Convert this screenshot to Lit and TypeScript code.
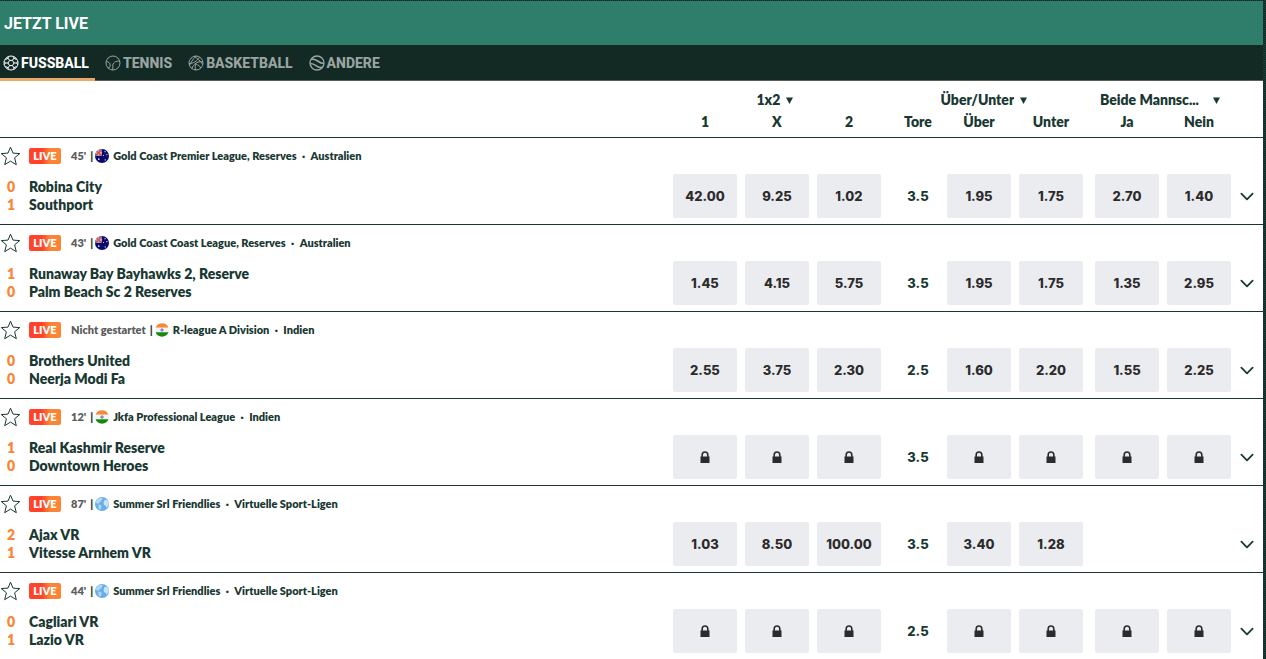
import { LitElement, html, svg, css, nothing } from "lit";
import { customElement, property } from "lit/decorators.js";
import { classMap } from "lit/directives/class-map.js";

type Flag = "au" | "in" | "world";

interface Match {
  time: string;
  flag: Flag;
  league: string;
  country: string;
  teams: [string, string];
  score: [number, number];
  goals: string;
  // null: market is locked, undefined: market is not offered
  odds: (string | null | undefined)[];
}

const LOCKED = Array(7).fill(null);

const MATCHES: Match[] = [
  { time: "45'", flag: "au", league: "Gold Coast Premier League, Reserves", country: "Australien", teams: ["Robina City", "Southport"], score: [0, 1], goals: "3.5", odds: ["42.00", "9.25", "1.02", "1.95", "1.75", "2.70", "1.40"] },
  { time: "43'", flag: "au", league: "Gold Coast Coast League, Reserves", country: "Australien", teams: ["Runaway Bay Bayhawks 2, Reserve", "Palm Beach Sc 2 Reserves"], score: [1, 0], goals: "3.5", odds: ["1.45", "4.15", "5.75", "1.95", "1.75", "1.35", "2.95"] },
  { time: "Nicht gestartet", flag: "in", league: "R-league A Division", country: "Indien", teams: ["Brothers United", "Neerja Modi Fa"], score: [0, 0], goals: "2.5", odds: ["2.55", "3.75", "2.30", "1.60", "2.20", "1.55", "2.25"] },
  { time: "12'", flag: "in", league: "Jkfa Professional League", country: "Indien", teams: ["Real Kashmir Reserve", "Downtown Heroes"], score: [1, 0], goals: "3.5", odds: LOCKED },
  { time: "87'", flag: "world", league: "Summer Srl Friendlies", country: "Virtuelle Sport-Ligen", teams: ["Ajax VR", "Vitesse Arnhem VR"], score: [2, 1], goals: "3.5", odds: ["1.03", "8.50", "100.00", "3.40", "1.28", undefined, undefined] },
  { time: "44'", flag: "world", league: "Summer Srl Friendlies", country: "Virtuelle Sport-Ligen", teams: ["Cagliari VR", "Lazio VR"], score: [0, 1], goals: "2.5", odds: LOCKED },
];

const SPORT_ICONS = {
  football: svg`<circle cx="8" cy="8" r="7"/><path d="M6.500 5.400h3L11 8l-1.500 2.600h-3L5 8z"/><path d="M6.500 5.400 5.200 3.200M9.500 5.400l1.300-2.200M11 8h2.500M9.500 10.600l1.300 2.200M6.500 10.600l-1.300 2.200M5 8H2.500M5.200 1.600v1.600L2.500 4.600M10.800 1.600v1.600l2.700 1.400M14.900 6.500 13.500 8l1.400 1.500M13.500 11.400l-2.700 1.400v1.600M5.200 14.400v-1.600l-2.700-1.400M1.100 6.500 2.500 8 1.100 9.500"/>`,
  tennis: svg`<circle cx="8" cy="8" r="7"/><path d="M1.200 6.500c2.500.2 4 1.600 4 3.600 0 1.800-.9 2.900-2 3.200M14.900 6.200C10.500 5.400 7.500 8 7.800 11.200c.1 1.500.2 2.500-.3 3.600"/>`,
  basketball: svg`<circle cx="8" cy="8" r="7"/><path d="M6 1.300c3 1.500 6.500 5 8.700 8.200M1 8.500C5 8.700 9.500 6 11.600 2M4 13.700C5 9.500 9 6 14.900 6.800M1.500 10.500c1.500-3 3-6 6.500-9.400M8 8c-.8 2-1 4.500-.5 7M8.200 9.500c2 .3 3.600 1.500 4.600 3.500"/>`,
  other: svg`<circle cx="8" cy="8" r="7" stroke-width="1.300"/><path d="M2.200 4.200c3.300-.5 5.300.8 7.300 2.300s3.500 2 5.300 1.700M1.300 8.500c2.700 0 4.700 1.300 6.500 2.600s3.500 1.800 5.400 1.300" stroke-width="1.700"/>`,
};

const FLAGS = {
  au: svg`<circle cx="8" cy="8" r="8" fill="#0b0b6e"/>
    <path d="M8 0a8 8 0 0 0-8 8h8z" fill="#7d7fb8"/>
    <path d="M8 3.500v1.800H1l.8-1.800zM4.200 1l1.600-.7V8H4.200z" fill="#fff"/>
    <path d="M8 4v1H1.200l.3-1zM4.600.8l.9-.4V8h-.9z" fill="#e8402f"/>
    <path d="M2 3l5.500 4.600M7.600.8 1 6.800" stroke="#e8402f" stroke-width="1"/>
    <g fill="#fff"><circle cx="4.300" cy="11.600" r=".9"/><circle cx="11.500" cy="3" r=".7"/><circle cx="13.600" cy="6.400" r=".7"/><circle cx="9.800" cy="7.400" r=".6"/><circle cx="11.700" cy="12.500" r=".7"/></g>`,
  in: svg`<path d="M0.600 5.300a8 8 0 0 1 14.800 0z" fill="#f68838"/>
    <path d="M.6 5.300h14.800a8 8 0 0 1 0 5.400H.6a8 8 0 0 1 0-5.400z" fill="#f4f4f2"/>
    <path d="M.6 10.700h14.800a8 8 0 0 1-14.800 0z" fill="#16870f"/>
    <circle cx="8" cy="8" r="1.500" fill="#9ba3cf" stroke="#5560a4" stroke-width=".6"/>`,
  world: svg`<circle cx="8" cy="8" r="8" fill="#66aee9"/>
    <path d="M1.500 4C2.800 1.800 5.400.4 7.600.8L9.300 2 7.600 3.200l-.3 1.900-2 .7-.7 1.700L3 7.800 1 6.500z" fill="#b5d6f1"/>
    <path d="M3.600 8.600l2.600.3 1.600 1.800-.8 2-1.400 2.200-1.500-1.700z" fill="#b5d6f1"/>
    <path d="M10.600 3.800l2.600-.9 1.900 2.300.7 3-1.200 2.400-1.400 1.700-.8-2.300-1.800-.7-.9-2.300z" fill="#cbe2f4"/>`,
};

@customElement("sport-tabs")
export class SportTabs extends LitElement {
  static styles = css`
    :host { display: block; background: #122924; }
    nav { display: flex; height: 36px; box-sizing: border-box; box-shadow: inset 0 -1px #5a5d5c; }
    .tab {
      display: flex; align-items: center; gap: 2px; padding: 0 6px 0 10px;
      color: #9aa5a2; text-decoration: none; box-sizing: border-box;
      font: 800 14px/20px Roboto, sans-serif; text-transform: uppercase;
    }
    .tab:first-child { padding-left: 3px; }
    .active { color: #fff; box-shadow: inset 0 -3px #eba869; }
    svg { width: 16px; height: 16px; fill: none; stroke: currentColor; stroke-width: 1; }
  `;

  render() {
    const tabs: [string, keyof typeof SPORT_ICONS][] = [
      ["Fussball", "football"], ["Tennis", "tennis"], ["Basketball", "basketball"], ["Andere", "other"],
    ];
    return html`<nav>${tabs.map(([label, icon], i) => html`
      <a href="#${icon}" class=${classMap({ tab: true, active: i === 0 })}>
        <svg viewBox="0 0 16 16" aria-hidden="true">${SPORT_ICONS[icon]}</svg>${label}</a>`)}</nav>`;
  }
}

@customElement("match-info")
export class MatchInfo extends LitElement {
  @property({ attribute: false }) match!: Match;

  static styles = css`
    :host { display: block; }
    .meta { display: flex; align-items: center; height: 20px; white-space: nowrap; font-size: 11px; line-height: 16px; }
    .star { display: flex; padding: 0; border: 0; background: none; color: inherit; cursor: pointer; }
    .star svg { width: 21px; height: 20px; fill: none; stroke: currentColor; stroke-width: 1; stroke-linejoin: round; }
    .live {
      width: 32px; height: 16px; margin: 0 10px 0 8px; border-radius: 2px; text-align: center;
      color: #fff; background: linear-gradient(90deg, #ff4229 40%, #fb8436 65%);
    }
    .time { color: #5c5c5c; margin-right: 4px; }
    .flag { width: 14px; height: 14px; margin: 0 4px 0 2px; }
    .dot { width: 14px; text-align: center; }
    .teams { display: grid; grid-template-columns: 22px 1fr; column-gap: 7px; padding-top: 12px; line-height: 18px; }
    .score { color: #fb8436; text-align: center; }
  `;

  render() {
    const m = this.match;
    return html`
      <div class="meta">
        <button class="star" aria-label="Favorit">
          <svg viewBox="0 0 21 20"><path d="M10.500 1.200l2.500 5.900 6.700.5-5.100 4.200 1.700 6.900-5.800-3.600-5.800 3.600 1.700-6.900L1.300 7.600l6.700-.5z"/></svg>
        </button>
        <span class="live">LIVE</span>
        <span class="time">${m.time}</span><span>|</span>
        <svg class="flag" viewBox="0 0 16 16" aria-hidden="true">${FLAGS[m.flag]}</svg>
        <span>${m.league}</span><span class="dot">·</span><span>${m.country}</span>
      </div>
      <div class="teams">
        ${m.teams.map((team, i) => html`<span class="score">${m.score[i]}</span><span>${team}</span>`)}
      </div>`;
  }
}

@customElement("app-root")
export class AppRoot extends LitElement {
  static styles = css`
    :host {
      display: block; height: 100vh; overflow: hidden; box-sizing: border-box;
      padding: 1px 3px 0 0; color: #1a3832;
      background: repeating-conic-gradient(#0d2420 0 25%, #1d443b 0 50%) 0 0 / 2px 2px;
      font: 800 14px/18px Lato, sans-serif;
    }
    main { background: #fff; min-height: 100%; }
    h1 {
      margin: 0; padding: 2px 4px 0; background: #2f7d6b; color: #fff;
      font: 700 16px/42px Roboto, sans-serif; text-transform: uppercase;
    }
    table { width: 100%; table-layout: fixed; border-collapse: separate; border-spacing: 0; }
    .odd-col { width: 72px; }
    .goals-col { width: 58px; }
    .wide-col { width: 76px; }
    .more-col { width: 28px; }
    th { padding: 0; font-weight: 800; line-height: 22px; }
    .groups th { padding-top: 8px; }
    .labels th { padding-bottom: 4px; border-bottom: 1px solid #1a3832; }
    .labels .last-group { padding-left: 4px; }
    .labels .goals-label { padding-left: 8px; }
    .picker { display: inline-flex; align-items: center; gap: 6px; padding-right: 4px; vertical-align: top; }
    .picker.wide { gap: 14px; padding-right: 2px; }
    select {
      appearance: none; border: 0; padding: 0; margin: 0; background: none;
      color: inherit; font: inherit; line-height: 22px; cursor: pointer;
    }
    .arrow { width: 7px; height: 7px; fill: currentColor; pointer-events: none; }
    td { padding: 36px 0 6px; border-bottom: 1px solid #1a3832; text-align: center; }
    .info { padding: 8px 0; text-align: left; vertical-align: top; }
    .odd {
      display: inline-flex; align-items: center; justify-content: center; vertical-align: top;
      width: 64px; height: 44px; padding: 0; border: 0; border-radius: 2px;
      background: #ebecf0; color: #2b2b2b; font: 800 13px/18px Inter, sans-serif; cursor: pointer;
    }
    .split { padding-left: 4px; }
    .goals { padding-left: 8px; font: 800 13px/18px Inter, sans-serif; }
    .lock { width: 10px; height: 12px; fill: #2b2b2b; }
    .more { display: flex; align-items: center; justify-content: center; width: 24px; height: 44px; padding: 0; border: 0; background: none; color: inherit; cursor: pointer; }
    .more svg { width: 14px; height: 9px; fill: none; stroke: currentColor; stroke-width: 1.600; stroke-linecap: round; stroke-linejoin: round; }
  `;

  private picker(label: string, wide = false) {
    return html`<span class=${classMap({ picker: true, wide })}>
      <select aria-label="Wettmarkt"><option>${label}</option></select>
      <svg class="arrow" viewBox="0 0 7 7" aria-hidden="true"><path d="M0 .5h7L3.500 7z"/></svg>
    </span>`;
  }

  private odd(value: string | null | undefined, i: number) {
    return html`<td class=${classMap({ split: i === 5 })}>${value === undefined ? nothing : value === null
      ? html`<button class="odd" disabled aria-label="Gesperrt"><svg class="lock" viewBox="0 0 10 12"><path fill-rule="evenodd" d="M.5 5.500h.9V3.800a3.600 3.600 0 0 1 7.200 0v1.700h.9V12h-9zM3 5.500h4V3.800a2 2 0 0 0-4 0z"/></svg></button>`
      : html`<button class="odd">${value}</button>`}</td>`;
  }

  render() {
    return html`
      <main>
        <h1>Jetzt live</h1>
        <sport-tabs></sport-tabs>
        <table>
          <colgroup>
            <col /><col class="odd-col" span="3" /><col class="goals-col" /><col class="odd-col" span="2" />
            <col class="wide-col" /><col class="odd-col" /><col class="more-col" />
          </colgroup>
          <thead>
            <tr class="groups">
              <th></th>
              <th colspan="3">${this.picker("1x2")}</th>
              <th colspan="3">${this.picker("Über/Unter")}</th>
              <th colspan="2">${this.picker("Beide Mannsc...", true)}</th>
              <th></th>
            </tr>
            <tr class="labels">
              <th></th>
              <th>1</th><th>X</th><th>2</th>
              <th class="goals-label">Tore</th><th>Über</th><th>Unter</th>
              <th class="last-group">Ja</th><th>Nein</th><th></th>
            </tr>
          </thead>
          <tbody>
            ${MATCHES.map((m) => html`<tr>
              <td class="info"><match-info .match=${m}></match-info></td>
              ${m.odds.slice(0, 3).map((o, i) => this.odd(o, i))}
              <td class="goals">${m.goals}</td>
              ${m.odds.slice(3).map((o, i) => this.odd(o, i + 3))}
              <td><button class="more" aria-label="Mehr anzeigen"><svg viewBox="0 0 12 8"><path d="M1 1.500l5 5 5-5"/></svg></button></td>
            </tr>`)}
          </tbody>
        </table>
      </main>`;
  }
}
